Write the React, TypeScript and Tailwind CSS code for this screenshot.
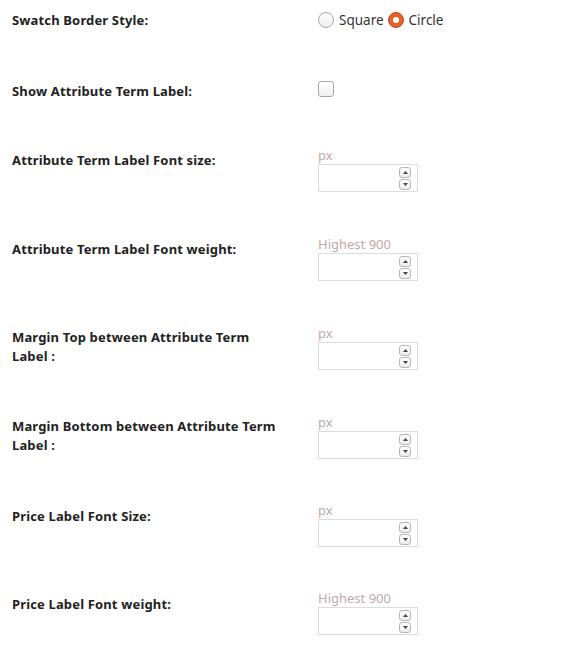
import React from "react";

const font = { fontFamily: '"Noto Sans", "Open Sans", sans-serif' };

function Spin() {
  return (
    <div className="absolute right-[6px] top-[2px] flex flex-col gap-[1px]">
      <div className="flex h-[11px] w-[12px] items-center justify-center rounded-[3px] border border-[#b8b8b8] bg-gradient-to-b from-white to-[#ececec]">
        <svg width="5" height="3" viewBox="0 0 5 3"><path d="M0 3 L2.5 0 L5 3 Z" fill="#444" /></svg>
      </div>
      <div className="flex h-[11px] w-[12px] items-center justify-center rounded-[3px] border border-[#b8b8b8] bg-gradient-to-b from-white to-[#ececec]">
        <svg width="5" height="3" viewBox="0 0 5 3"><path d="M0 0 L2.5 3 L5 0 Z" fill="#444" /></svg>
      </div>
    </div>
  );
}

function NumField({ hint }: { hint: string }) {
  return (
    <div className="flex flex-col">
      <div className="text-[13px] leading-[18px] text-[#bfaaa5]">{hint}</div>
      <div className="relative h-[28px] w-[100px] border border-[#dcdcdc] bg-white">
        <Spin />
      </div>
    </div>
  );
}

function Row({
  label,
  children,
  h,
  mt = 0,
  lift = false,
}: {
  label: React.ReactNode;
  children: React.ReactNode;
  h: number;
  mt?: number;
  lift?: boolean;
}) {
  return (
    <div className="flex items-center" style={{ height: h, marginTop: mt }}>
      <div
        className={
          "w-[305px] pl-[12px] pr-[10px] text-[13px] font-bold leading-[19px] tracking-[0.15px] text-[#222] " +
          (lift ? "pb-[16px]" : "")
        }
      >
        {label}
      </div>
      <div className="pl-[13px]">{children}</div>
    </div>
  );
}

export default function App() {
  return (
    <div className="h-[663px] w-[563px] bg-white" style={font}>
      <Row label="Swatch Border Style:" h={40}>
        <div className="flex items-center text-[13.5px] text-[#333]">
          <span className="mr-[5px] inline-block h-[16px] w-[16px] rounded-full border border-[#a8a8a8] bg-gradient-to-b from-white to-[#efefef]" />
          <span className="mr-[4px]">Square</span>
          <span className="mr-[5px] flex h-[16px] w-[16px] items-center justify-center rounded-full border border-[#c2481c] bg-[#e4602e]">
            <span className="h-[6px] w-[6px] rounded-full bg-white" />
          </span>
          <span>Circle</span>
        </div>
      </Row>
      <Row label="Show Attribute Term Label:" h={66} mt={18}>
        <span className="mt-[1px] inline-block h-[16px] w-[16px] rounded-[3px] border border-[#a8a8a8] bg-gradient-to-b from-white to-[#efefef]" />
      </Row>
      <Row label="Attribute Term Label Font size:" h={89} lift>
        <NumField hint="px" />
      </Row>
      <Row label="Attribute Term Label Font weight:" h={89} lift>
        <NumField hint="Highest 900" />
      </Row>
      <Row label={<>Margin Top between Attribute Term<br />Label :</>} h={89}>
        <NumField hint="px" />
      </Row>
      <Row label={<>Margin Bottom between Attribute Term<br />Label :</>} h={89}>
        <NumField hint="px" />
      </Row>
      <Row label="Price Label Font Size:" h={88} lift>
        <NumField hint="px" />
      </Row>
      <Row label="Price Label Font weight:" h={88} lift>
        <NumField hint="Highest 900" />
      </Row>
    </div>
  );
}
